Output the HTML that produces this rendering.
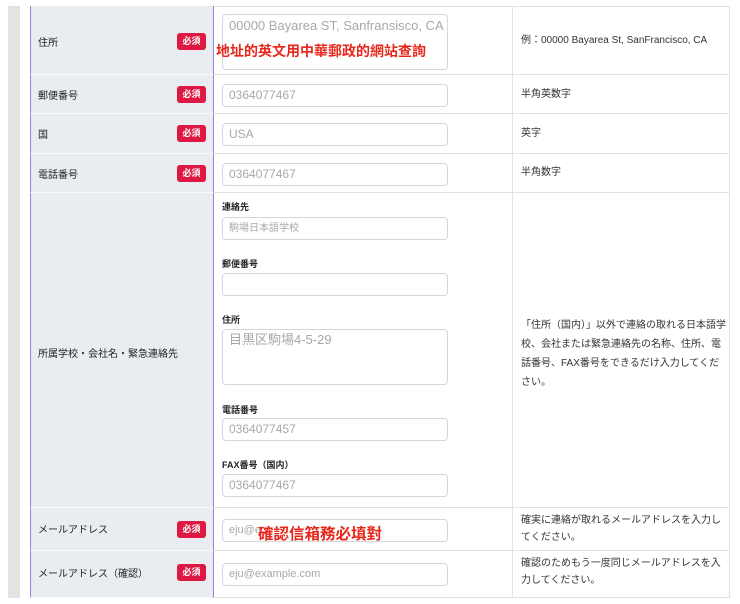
<!DOCTYPE html>
<html><head><meta charset="utf-8"><style>
*{box-sizing:border-box;margin:0;padding:0}
body{width:740px;height:604px;background:#fff;position:relative;overflow:hidden;font-family:"Liberation Sans","Noto Sans CJK JP",sans-serif;color:#333}
.a{position:absolute}
.bar{left:8px;top:6px;width:12px;height:592px;background:#e3e3e3}
.c1{left:30px;width:184px;background:#e9edf0;border-left:1px solid #8c86e6;border-right:1px solid #8c86e6;border-bottom:1px solid #fafafa}
.c2{left:214px;width:299px;border-bottom:1px solid #e2e2e2;border-right:1px solid #e2e2e2}
.c3{left:513px;width:217px;border-bottom:1px solid #e2e2e2;border-right:1px solid #e2e2e2}
.lb{font-size:10px;color:#222;position:absolute;left:38px}
.bd{position:absolute;left:177px;width:29px;height:17px;background:#dc1843;color:#fff;font-size:9px;border-radius:3px;text-align:center;line-height:17px;font-weight:bold}
.in{position:absolute;left:222px;width:226px;height:23px;border:1px solid #d6d6d6;border-radius:4px;font-size:12px;color:#a8a8a8;padding-left:6px;line-height:21px;background:#fff}
.ds{position:absolute;left:521px;font-size:10px;color:#333;line-height:17px}
.sl{position:absolute;left:222px;font-size:9px;font-weight:bold;color:#222}
.red{position:absolute;color:#e8261b;font-weight:bold;font-family:"Liberation Sans","Noto Sans CJK TC",sans-serif}
</style></head><body>
<div class="a bar"></div>
<div class="a" style="left:30px;top:6px;width:700px;height:1px;background:#e2e2e2"></div>
<div class="a c1" style="top:6px;height:69px"></div><div class="a c2" style="top:6px;height:69px"></div><div class="a c3" style="top:6px;height:69px"></div>
<div class="a c1" style="top:75px;height:39px"></div><div class="a c2" style="top:75px;height:39px"></div><div class="a c3" style="top:75px;height:39px"></div>
<div class="a c1" style="top:114px;height:40px"></div><div class="a c2" style="top:114px;height:40px"></div><div class="a c3" style="top:114px;height:40px"></div>
<div class="a c1" style="top:154px;height:39px"></div><div class="a c2" style="top:154px;height:39px"></div><div class="a c3" style="top:154px;height:39px"></div>
<div class="a c1" style="top:193px;height:315px"></div><div class="a c2" style="top:193px;height:315px"></div><div class="a c3" style="top:193px;height:315px"></div>
<div class="a c1" style="top:508px;height:43px"></div><div class="a c2" style="top:508px;height:43px"></div><div class="a c3" style="top:508px;height:43px"></div>
<div class="a c1" style="top:551px;height:47px"></div><div class="a c2" style="top:551px;height:47px"></div><div class="a c3" style="top:551px;height:47px"></div>

<div class="lb" style="top:34px">住所</div><div class="bd" style="top:33px">必須</div>
<div class="in" style="top:14px;height:56px;font-size:13px;line-height:20px;padding-top:1px">00000 Bayarea ST, Sanfransisco, CA</div>
<div class="red" style="left:216px;top:41px;font-size:14px">地址的英文用中華郵政的網站查詢</div>
<div class="ds" style="top:32px">例：00000 Bayarea St, SanFrancisco, CA</div>

<div class="lb" style="top:87px">郵便番号</div><div class="bd" style="top:86px">必須</div>
<div class="in" style="top:84px">0364077467</div><div class="ds" style="top:86px">半角英数字</div>

<div class="lb" style="top:126px">国</div><div class="bd" style="top:125px">必須</div>
<div class="in" style="top:123px">USA</div><div class="ds" style="top:125px">英字</div>

<div class="lb" style="top:166px">電話番号</div><div class="bd" style="top:165px">必須</div>
<div class="in" style="top:163px">0364077467</div><div class="ds" style="top:164px">半角数字</div>

<div class="lb" style="top:345px">所属学校・会社名・緊急連絡先</div>
<div class="sl" style="top:200px">連絡先</div>
<div class="in" style="top:217px;font-size:10px">駒場日本語学校</div>
<div class="sl" style="top:257px">郵便番号</div>
<div class="in" style="top:273px"></div>
<div class="sl" style="top:313px">住所</div>
<div class="in" style="top:329px;height:56px;font-size:13px;line-height:20px">目黒区駒場4-5-29</div>
<div class="sl" style="top:403px">電話番号</div>
<div class="in" style="top:418px">0364077457</div>
<div class="sl" style="top:458px">FAX番号（国内）</div>
<div class="in" style="top:474px">0364077467</div>
<div class="ds" style="top:316px;line-height:19px;width:208px">「住所（国内）」以外で連絡の取れる日本語学校、会社または緊急連絡先の名称、住所、電話番号、FAX番号をできるだけ入力してください。</div>

<div class="lb" style="top:521px">メールアドレス</div><div class="bd" style="top:521px">必須</div>
<div class="in" style="top:519px;font-size:11px">eju@e</div>
<div class="red" style="left:258px;top:522px;font-size:15.5px">確認信箱務必填對</div>
<div class="ds" style="top:512px;width:202px">確実に連絡が取れるメールアドレスを入力してください。</div>

<div class="lb" style="top:565px">メールアドレス（確認）</div><div class="bd" style="top:564px">必須</div>
<div class="in" style="top:563px;font-size:11px">eju@example.com</div>
<div class="ds" style="top:555px;width:202px">確認のためもう一度同じメールアドレスを入力してください。</div>
</body></html>
